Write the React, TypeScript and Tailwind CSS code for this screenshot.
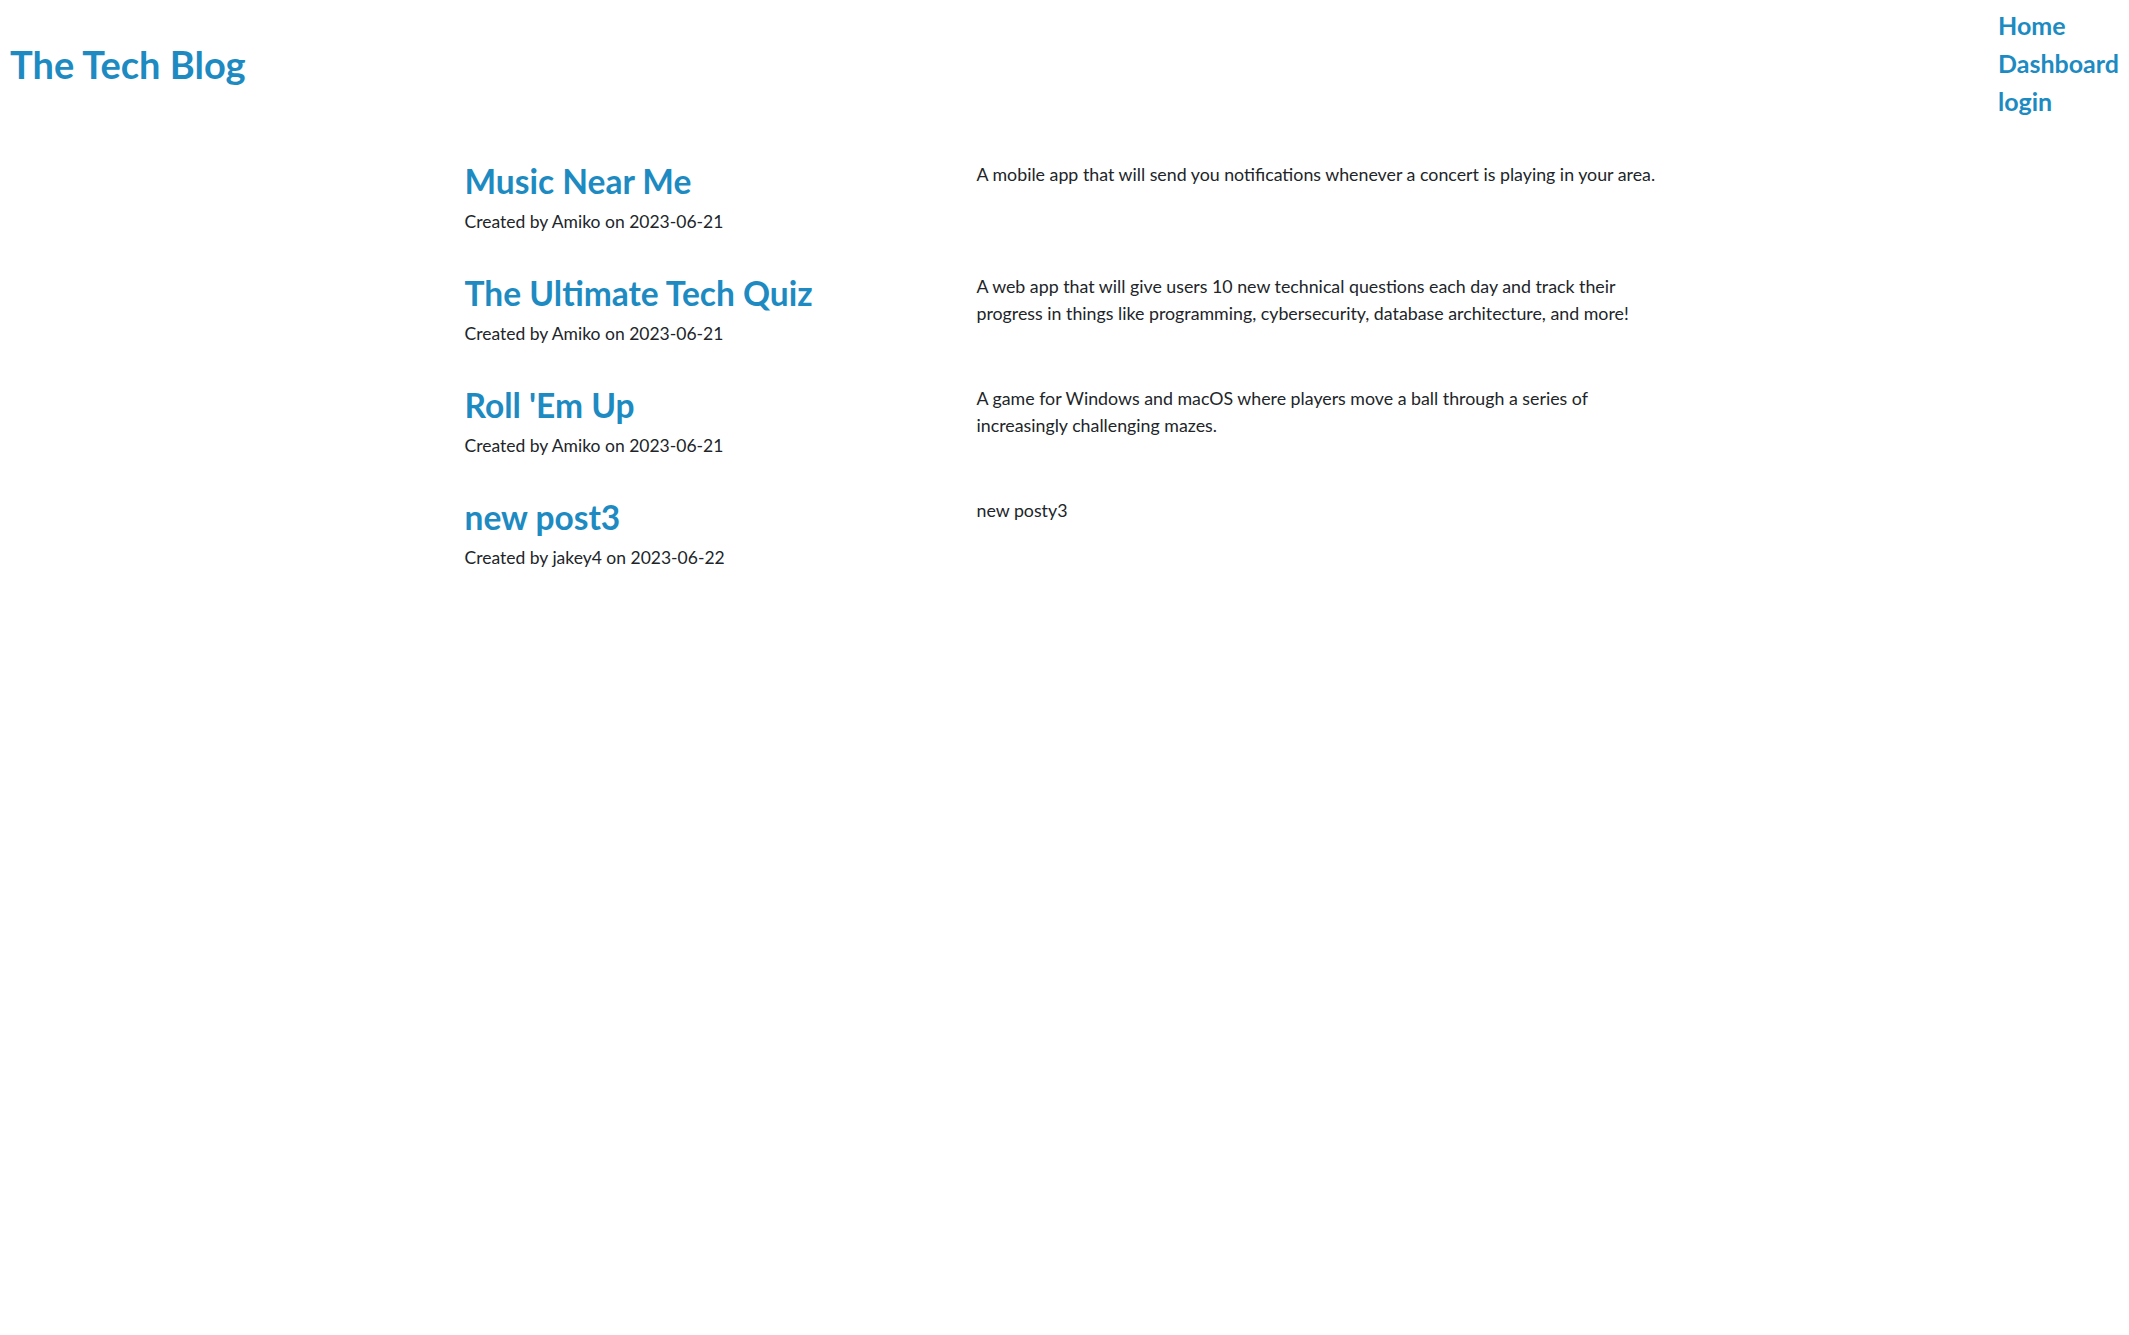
const posts = [
  {
    title: 'Music Near Me',
    author: 'Amiko',
    date: '2023-06-21',
    body: 'A mobile app that will send you notifications whenever a concert is playing in your area.',
  },
  {
    title: 'The Ultimate Tech Quiz',
    author: 'Amiko',
    date: '2023-06-21',
    body: 'A web app that will give users 10 new technical questions each day and track their progress in things like programming, cybersecurity, database architecture, and more!',
  },
  {
    title: "Roll 'Em Up",
    author: 'Amiko',
    date: '2023-06-21',
    body: 'A game for Windows and macOS where players move a ball through a series of increasingly challenging mazes.',
  },
  {
    title: 'new post3',
    author: 'jakey4',
    date: '2023-06-22',
    body: 'new posty3',
  },
];

export default function App() {
  return (
    <div className="min-h-screen bg-white font-['Lato',sans-serif] text-[#212529]">
      <header className="flex justify-between items-start">
        <h1 className="pl-[10px] pt-[45px] text-[38px] font-bold leading-none text-[#1d8bc2]">
          The Tech Blog
        </h1>
        <nav className="flex flex-col w-[131px] pt-[6px] text-[25px] font-bold leading-[38px] text-[#1d8bc2]">
          <a href="#">Home</a>
          <a href="#">Dashboard</a>
          <a href="#">login</a>
        </nav>
      </header>
      <main className="w-[1200px] mx-auto mt-[41px] flex flex-col gap-[38px]">
        {posts.map((post) => (
          <div key={post.title} className="flex">
            <div className="w-[512px] shrink-0">
              <h2 className="text-[33.5px] font-bold leading-[40px] text-[#1d8bc2]">{post.title}</h2>
              <p className="mt-[8px] text-[17.5px] leading-[26px]">
                Created by {post.author} on {post.date}
              </p>
            </div>
            <p className="flex-1 text-[17.8px] leading-[27px]">{post.body}</p>
          </div>
        ))}
      </main>
    </div>
  );
}
